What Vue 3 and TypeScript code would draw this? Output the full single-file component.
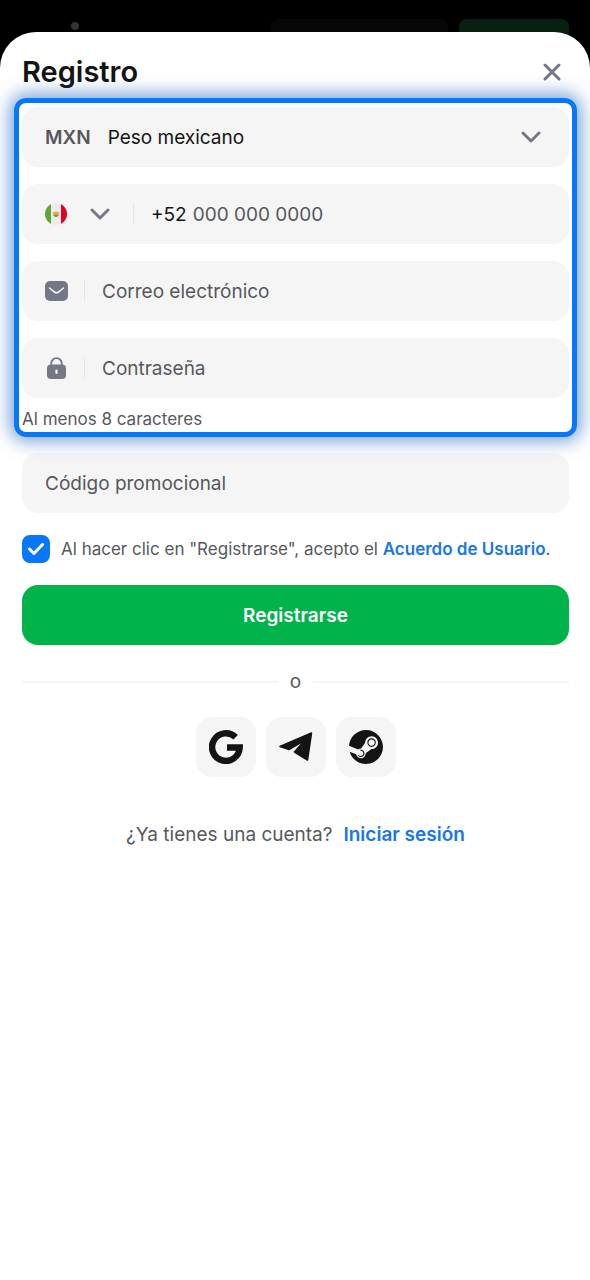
<script setup lang="ts">
import { ref } from 'vue'

const currency = ref('MXN')
const country = ref('MX')
const phone = ref('')
const email = ref('')
const password = ref('')
const promo = ref('')
const accepted = ref(true)
</script>

<template>
  <div class="page">
    <div class="backdrop" aria-hidden="true">
      <span class="dot"></span>
      <span class="ghost"></span>
      <span class="ghost green"></span>
    </div>

    <main class="sheet">
      <header class="head">
        <h1>Registro</h1>
        <button type="button" class="close" aria-label="Cerrar">
          <svg width="18" height="18" viewBox="0 0 18 18"><path d="M2 2L16 16M16 2L2 16" /></svg>
        </button>
      </header>

      <form @submit.prevent>
        <div class="highlight">
          <div class="field">
            <label class="code" for="currency">MXN</label>
            <select id="currency" v-model="currency" class="entry">
              <option value="MXN">Peso mexicano</option>
            </select>
            <svg class="chevron" width="20" height="14" viewBox="0 0 20 14"><path d="M2 3L10 11L18 3" /></svg>
          </div>

          <div class="field">
            <div class="country">
              <svg width="22" height="22" viewBox="0 0 22 22">
                <clipPath id="round"><circle cx="11" cy="11" r="11" /></clipPath>
                <g clip-path="url(#round)">
                  <path fill="#ececee" d="M0 0H22V22H0z" />
                  <path fill="#5fa637" d="M0 0H6V22H0z" />
                  <path fill="#e50022" d="M16 0H22V22H16z" />
                  <path fill="#5fa637" d="M8 11C8.200 15 13.800 15 14 11L11 12z" />
                  <path fill="#f59a23" d="M7.500 9L10 9.500L11 8L12 9.500L14.500 9L13 12H9z" />
                </g>
              </svg>
              <svg class="chevron" width="20" height="14" viewBox="0 0 20 14"><path d="M2 3L10 11L18 3" /></svg>
              <select v-model="country" aria-label="País">
                <option value="MX" aria-label="México"></option>
              </select>
            </div>
            <span class="rule"></span>
            <label class="prefix" for="phone">+52</label>
            <input id="phone" v-model="phone" class="entry number" type="tel" placeholder="000 000 0000" />
          </div>

          <div class="field">
            <label class="icon" for="email" aria-label="Correo electrónico">
              <svg width="23" height="20" viewBox="0 0 23 20">
                <rect width="23" height="20" rx="5" fill="#737884" />
                <path d="M4.500 7L9.500 11Q11.500 12.500 13.500 11L18.500 7" fill="none" stroke="#f5f5f5" stroke-width="1.600" stroke-linecap="round" />
              </svg>
            </label>
            <span class="rule"></span>
            <input id="email" v-model="email" class="entry" type="email" placeholder="Correo electrónico" />
          </div>

          <div class="field">
            <label class="icon" for="password" aria-label="Contraseña">
              <svg width="19" height="22" viewBox="0 0 19 22">
                <path d="M4.200 10V6.500A5.300 5.300 0 0 1 14.800 6.500V10" fill="none" stroke="#737884" stroke-width="1.800" />
                <rect y="7.500" width="19" height="14.500" rx="4" fill="#737884" />
                <path d="M9.500 13.500V16" stroke="#f5f5f5" stroke-width="2.200" stroke-linecap="round" />
              </svg>
            </label>
            <span class="rule"></span>
            <input id="password" v-model="password" class="entry" type="password" placeholder="Contraseña" />
          </div>
          <p class="hint">Al menos 8 caracteres</p>
        </div>

        <div class="field">
          <input v-model="promo" class="entry" type="text" aria-label="Código promocional" placeholder="Código promocional" />
        </div>

        <div class="terms">
          <span class="tick">
            <input id="terms" v-model="accepted" type="checkbox" />
            <svg v-if="accepted" width="16" height="12" viewBox="0 0 16 12"><path d="M1.500 6L6 10.500L14.500 1.500" /></svg>
          </span>
          <label for="terms">Al hacer clic en "Registrarse", acepto el <a href="#">Acuerdo de Usuario</a>.</label>
        </div>

        <button type="submit" class="submit">Registrarse</button>
      </form>

      <div class="divider"><span>o</span></div>

      <div class="social">
        <button type="button" aria-label="Google">
          <svg width="34" height="34" viewBox="0 0 34 34">
            <path d="M26.600 7.300A13.800 13.800 0 1 0 30.700 17.500H18" fill="none" stroke="#141414" stroke-width="6.400" />
          </svg>
        </button>
        <button type="button" aria-label="Telegram">
          <svg width="34" height="30" viewBox="0 0 34 30">
            <path d="M1 14.500L32.500 1L28.500 28L15.500 20L26 8L10 17.500z" fill="#141414" stroke="#141414" stroke-width="1.600" stroke-linejoin="round" />
          </svg>
        </button>
        <button type="button" aria-label="Steam">
          <svg width="34" height="34" viewBox="0 0 24 24">
            <path fill="#141414" d="M11.979 0C5.678 0 .511 4.860.022 11.037l6.432 2.658c.545-.371 1.203-.59 1.912-.59.063 0 .125.004.188.006l2.861-4.142V8.910c0-2.495 2.028-4.524 4.524-4.524 2.494 0 4.524 2.031 4.524 4.527s-2.030 4.525-4.524 4.525h-.105l-4.076 2.911c0 .052.004.105.004.159 0 1.875-1.515 3.396-3.390 3.396-1.635 0-3.016-1.173-3.331-2.727L.436 15.270C1.862 20.307 6.486 24 11.979 24c6.627 0 11.999-5.373 11.999-12S18.605 0 11.979 0zM7.540 18.210l-1.473-.61c.262.543.714.999 1.314 1.250 1.297.539 2.793-.076 3.332-1.375.263-.63.264-1.319.005-1.949s-.75-1.121-1.377-1.383c-.624-.26-1.290-.249-1.878-.03l1.523.63c.956.4 1.409 1.500 1.009 2.455-.397.957-1.497 1.410-2.454 1.012H7.540zm11.415-9.303c0-1.662-1.353-3.015-3.015-3.015-1.665 0-3.015 1.353-3.015 3.015 0 1.665 1.350 3.015 3.015 3.015 1.663 0 3.015-1.350 3.015-3.015zm-5.273-.005c0-1.252 1.013-2.266 2.265-2.266 1.249 0 2.266 1.014 2.266 2.266 0 1.251-1.017 2.265-2.266 2.265-1.253 0-2.265-1.014-2.265-2.265z" />
          </svg>
        </button>
      </div>

      <p class="login"><span>¿Ya tienes una cuenta?</span><a href="#">Iniciar sesión</a></p>
    </main>
  </div>
</template>

<style>
body {
  background: #fff;
}
</style>

<style scoped>
* {
  box-sizing: border-box;
}
.page {
  display: flex;
  flex-direction: column;
  min-height: 100vh;
  font-family: Inter, 'Liberation Sans', sans-serif;
  font-size: 19px;
  color: #56585e;
}
.backdrop {
  display: flex;
  gap: 11px;
  height: 76px;
  padding: 19px 21px 0;
  background: #000;
}
.dot {
  width: 8px;
  height: 8px;
  margin: 3px auto 0 50px;
  border-radius: 50%;
  background: #333;
}
.ghost {
  width: 177px;
  height: 40px;
  border-radius: 8px;
  background: #070707;
}
.ghost.green {
  width: 110px;
  background: #082010;
}
.sheet {
  position: relative;
  flex: 1;
  margin-top: -44px;
  padding: 0 21px 32px 22px;
  border-radius: 36px 36px 0 0;
  background: #fff;
}
.head {
  display: flex;
  align-items: center;
  justify-content: space-between;
  height: 66px;
  padding: 13px 0 0;
}
h1 {
  margin: 0;
  font-size: 29px;
  line-height: 36px;
  font-weight: 600;
  color: #141414;
}
button {
  font: inherit;
  border: 0;
  cursor: pointer;
}
svg {
  display: block;
  flex: none;
}
.close {
  padding: 8px;
  background: none;
}
.close path,
.chevron path {
  fill: none;
  stroke: #737884;
  stroke-width: 3;
  stroke-linecap: round;
  stroke-linejoin: round;
}
.highlight {
  position: relative;
  z-index: 1;
  display: flex;
  flex-direction: column;
  gap: 17px;
  margin: 0 -8px 16px;
  padding: 4px 3px 3px;
  border: 5px solid #0877f9;
  border-radius: 12px;
  box-shadow: 0 0 18px 4px rgba(0, 84, 180, 0.55);
}
.field {
  display: flex;
  align-items: center;
  height: 60px;
  padding: 0 28px 0 23px;
  border-radius: 16px;
  background: #f5f5f5;
}
.code {
  margin-right: 17px;
  font-weight: 600;
}
.entry {
  flex: 1;
  min-width: 0;
  height: 100%;
  padding: 0;
  border: 0;
  outline: 0;
  appearance: none;
  background: none;
  font: inherit;
  color: #141414;
}
.entry::placeholder {
  color: #56585e;
  opacity: 1;
}
.country {
  position: relative;
  display: flex;
  align-items: center;
  gap: 23px;
}
.country select {
  position: absolute;
  inset: 0;
  border: 0;
  appearance: none;
  background: none;
}
.rule {
  width: 1px;
  height: 22px;
  margin: 0 17px 0 16px;
  background: #e6e6e8;
}
.country + .rule {
  margin-left: 23px;
}
.prefix {
  margin-right: 6px;
  color: #141414;
}
.icon {
  display: flex;
  justify-content: center;
  width: 23px;
}
.hint {
  margin: -5px 0 0;
  font-size: 17px;
  line-height: 19px;
}
.terms {
  display: flex;
  align-items: center;
  gap: 11px;
  margin: 22px 0;
  font-size: 17px;
  line-height: 28px;
}
.tick {
  display: grid;
  place-items: center;
}
.tick > * {
  grid-area: 1 / 1;
}
.tick input {
  width: 28px;
  height: 28px;
  margin: 0;
  appearance: none;
  border: 2px solid #0877f9;
  border-radius: 8px;
}
.tick input:checked {
  background: #0877f9;
}
.tick svg {
  pointer-events: none;
}
.tick path {
  fill: none;
  stroke: #fff;
  stroke-width: 3;
  stroke-linecap: round;
  stroke-linejoin: round;
}
a {
  font-weight: 600;
  color: #1877e8;
  text-decoration: none;
}
.submit {
  display: block;
  width: 100%;
  height: 60px;
  border-radius: 16px;
  background: #00b34a;
  font-weight: 600;
  color: #fff;
}
.divider {
  display: flex;
  align-items: center;
  gap: 12px;
  margin-top: 25px;
  line-height: 24px;
}
.divider::before,
.divider::after {
  content: '';
  flex: 1;
  height: 2px;
  background: #f5f5f5;
}
.social {
  display: flex;
  justify-content: center;
  gap: 10px;
  margin-top: 23px;
}
.social button {
  display: grid;
  place-items: center;
  width: 60px;
  height: 60px;
  padding: 0;
  border-radius: 16px;
  background: #f5f5f5;
}
.login {
  display: flex;
  justify-content: center;
  gap: 11px;
  margin: 46px 0 0;
  line-height: 24px;
}
</style>
